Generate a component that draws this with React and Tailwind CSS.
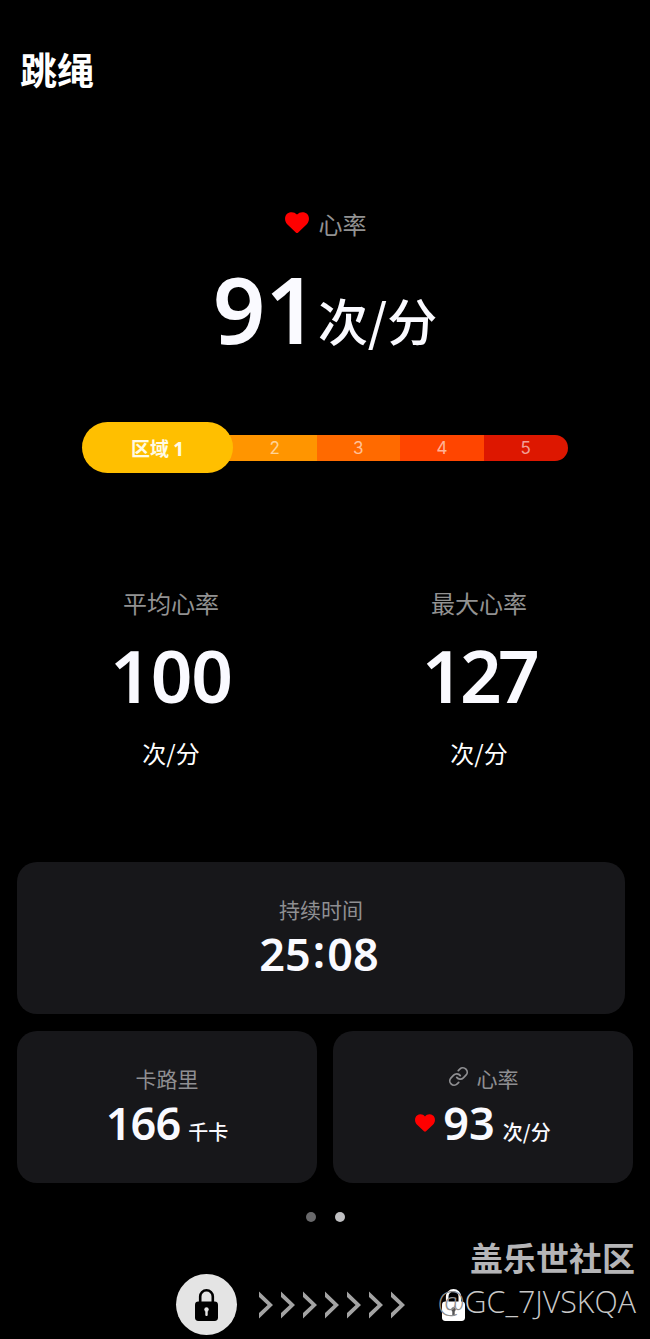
import { Link } from 'lucide-react'

const CJK = "font-['Noto_Sans_CJK_SC',sans-serif]"
const NUM = "font-['Noto_Sans','Noto_Sans_CJK_SC',sans-serif]"

const ZONES = [
  { id: 3, color: 'bg-[#ff6a00]' },
  { id: 4, color: 'bg-[#ff4500]' },
  { id: 5, color: 'bg-[#dd1700] rounded-r-full' },
]

const STATS = [
  { label: '平均心率', value: '100', unit: '次/分', tracking: 'tracking-[-0.015em]' },
  { label: '最大心率', value: '127', unit: '次/分', tracking: 'tracking-[-0.05em]' },
]

function Heart({ className }) {
  return (
    <svg viewBox="0 0 24 21" className={className} fill="#ff0000">
      <path d="M10.8 20.4 L2.2 12.2 C-0.8 9 -0.6 4 2.4 1.6 C5.4 -0.7 9.6 -0.2 12 2.6 C14.4 -0.2 18.6 -0.7 21.6 1.6 C24.6 4 24.8 9 21.8 12.2 L13.2 20.4 Q12 21.5 10.8 20.4 Z" />
    </svg>
  )
}

function Lock({ className, hole }) {
  return (
    <svg viewBox="0 0 23 32" className={className}>
      <path d="M5.2 14 V7.6 A6.3 6.3 0 0 1 17.8 7.6 V14" fill="none" stroke="currentColor" strokeWidth="2.6" />
      <rect x="0" y="12.6" width="23" height="19.4" rx="3.4" fill="currentColor" />
      <circle cx="11.5" cy="20.4" r="2.2" fill={hole} />
      <rect x="10.3" y="20" width="2.4" height="7" rx="1" fill={hole} />
    </svg>
  )
}

function Chevron() {
  return (
    <svg viewBox="0 0 14 28" className="w-3.5 h-7" fill="#a3a3a3">
      <path d="M0 0.5 L14 14 L0 27.5 V22 L8.6 14 L0 6 Z" />
    </svg>
  )
}

function Card({ className, label, children }) {
  return (
    <div className={`${className} h-[152px] rounded-[20px] bg-[#17171a] pt-[31px] flex flex-col items-center`}>
      <div className="h-8 flex items-center gap-2 text-[21px] leading-8 text-[#8f8f92]">{label}</div>
      <div className="mt-px h-14 flex items-baseline leading-[56px] text-[#fafaff]">{children}</div>
    </div>
  )
}

export default function App() {
  return (
    <div className={`${CJK} relative w-[650px] h-[1339px] overflow-hidden bg-black text-white flex flex-col whitespace-nowrap`}>
      <h1 className="mt-[47px] ml-[20px] h-[45px] text-[37px] leading-[44px] font-bold">跳绳</h1>

      <section className="mt-[116px] flex flex-col items-center">
        <div className="h-8 pl-px flex items-center gap-2.5 text-2xl leading-8 text-[#929292]">
          <Heart className="w-6 h-[21px] -mt-1" />
          <span>心率</span>
        </div>
        <div className="mt-[19px] h-[101px] flex items-baseline leading-[100px] text-[#fafaff]">
          <span className={`${NUM} text-[92px] font-semibold`}>91</span>
          <span className="relative -top-[3px] text-[50px] font-medium">次/分</span>
        </div>
      </section>

      <section className="mt-[62px] ml-[82px] h-[51px] flex items-center">
        <div className="z-10 w-[151px] h-[51px] shrink-0 rounded-full bg-[#ffbf00] flex items-center justify-center text-[19px] font-bold text-[#fffbe6]">
          <span className="pt-0.5">区域 <span className={NUM}>1</span></span>
        </div>
        <div className="-ml-5 pl-5 pt-0.5 w-[103.5px] h-[26px] bg-[#ff9500] font-['Inter'] flex items-center justify-center text-[17px] text-white/60">
          2
        </div>
        {ZONES.map((z) => (
          <div key={z.id} className={`${z.color} pt-0.5 w-[83.7px] h-[26px] font-['Inter'] flex items-center justify-center text-[17px] text-white/60`}>
            {z.id}
          </div>
        ))}
      </section>

      <section className="mt-[114px] ml-[17px] w-[616px] grid grid-cols-2">
        {STATS.map((s) => (
          <div key={s.label} className="flex flex-col items-center">
            <div className="h-8 text-2xl leading-8 text-[#929292]">{s.label}</div>
            <div className={`${NUM} ${s.tracking} mt-4 h-20 text-[73px] leading-[80px] font-semibold text-[#fafaff]`}>{s.value}</div>
            <div className="mt-[22px] h-8 text-2xl leading-8">{s.unit}</div>
          </div>
        ))}
      </section>

      <section className="mt-[93px] ml-[17px] w-[616px]">
        <Card className="w-[608px]" label="持续时间">
          <span className={`${NUM} pr-1 text-[45px] font-semibold`}>
            25<span className="relative -top-[3px] px-0.5">:</span>08
          </span>
        </Card>
        <div className="mt-[17px] flex gap-4">
          <Card className="w-[300px]" label="卡路里">
            <span className={`${NUM} tracking-[-0.02em] text-[45px] font-semibold`}>166</span>
            <span className="ml-2 text-[20px] font-medium">千卡</span>
          </Card>
          <Card className="w-[300px]" label={<><Link className="size-[21px] -mt-1" strokeWidth={2} />心率</>}>
            <Heart className="w-5 h-[18px] self-center -mt-px mr-2" />
            <span className={`${NUM} text-[45px] font-semibold`}>93</span>
            <span className="ml-2 text-[20px] font-medium">次/分</span>
          </Card>
        </div>
      </section>

      <div className="mt-[29px] ml-[305.5px] h-2.5 flex gap-[19px]">
        <span className="size-2.5 rounded-full bg-[#69696b]" />
        <span className="size-2.5 rounded-full bg-[#c0c0c2]" />
      </div>

      <div className="mt-[52px] ml-[176px] h-[61px] flex items-center">
        <div className="size-[61px] rounded-full bg-[#e4e4e4] text-black flex items-center justify-center">
          <Lock className="w-[23px] h-8" hole="#e4e4e4" />
        </div>
        <div className="ml-[22px] flex gap-2">
          {[0, 1, 2, 3, 4, 5, 6].map((i) => <Chevron key={i} />)}
        </div>
        <Lock className="ml-[37px] w-[23px] h-8 text-white" hole="#555555" />
      </div>

      {/* community watermark, floats over the unlock bar */}
      <div className="absolute right-[15px] top-[1235px] text-[33px] leading-[44px] font-bold text-[#b5b5b7]">盖乐世社区</div>
      <div className="absolute right-[14px] top-[1282px] font-['Open_Sans','Noto_Sans',sans-serif] text-[30.4px] leading-[40px] font-light text-[#c8c8c8]">
        <span className="text-[#909090]">@</span>GC_7JVSKQA
      </div>
    </div>
  )
}
